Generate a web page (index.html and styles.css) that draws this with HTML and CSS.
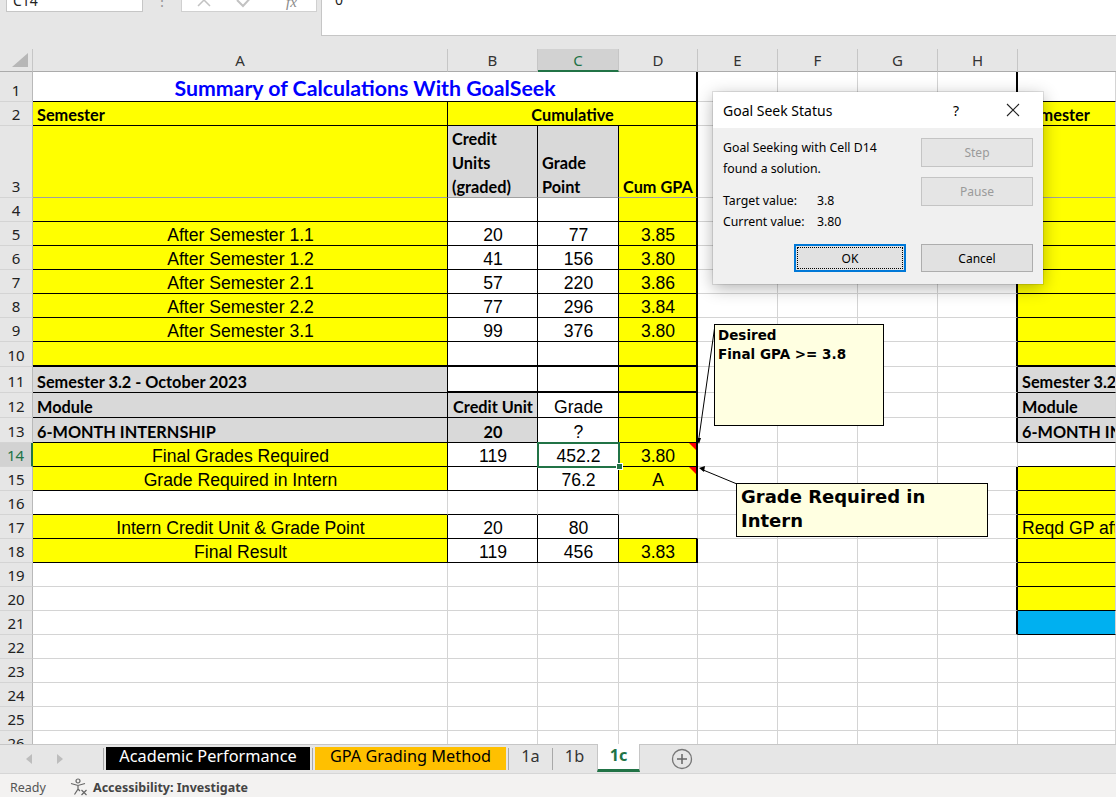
FILE: index.html
```html
<!DOCTYPE html>
<html>
<head>
<meta charset="utf-8">
<link rel="stylesheet" href="styles.css">
</head>
<body>
<div class="app">
  <div class="fbar">
    <div class="namebox"><span>C14</span></div>
    <div class="dots">⋮</div>
    <div class="fnbox">
      <svg width="135" height="24" viewBox="0 0 135 24">
        <path d="M16 6 L28 18 M28 6 L16 18" stroke="#c2c2c2" stroke-width="1.5" fill="none"/>
        <path d="M55 12 L61 18 L73 5" stroke="#c2c2c2" stroke-width="2" fill="none"/>
        <text x="104" y="19" font-family="Liberation Serif, serif" font-style="italic" font-size="15" fill="#8a8a8a">fx</text>
      </svg>
    </div>
    <div class="finput"><span>0</span></div>
  </div>

  <div class="sheet">
    <!-- header -->
    <div class="corner"><svg width="18" height="15" viewBox="0 0 18 15"><polygon points="17,0 17,14 1,14" fill="#b7b7b7"/></svg></div>
    <div class="ch">A</div><div class="ch">B</div><div class="ch sel">C</div><div class="ch">D</div><div class="ch">E</div><div class="ch">F</div><div class="ch">G</div><div class="ch">H</div><div class="ch chi"></div>

    <!-- row 1 -->
    <div class="rh">1</div>
    <div class="c title s4 bb br2">Summary of Calculations With GoalSeek</div>
    <div class="c"></div><div class="c"></div><div class="c"></div><div class="c br2"></div>
    <div class="c bb"></div>

    <!-- row 2 -->
    <div class="rh">2</div>
    <div class="c y b bb br">Semester</div>
    <div class="c y b ctr s3 bb br2">Cumulative</div>
    <div class="c"></div><div class="c"></div><div class="c"></div><div class="c br2"></div>
    <div class="c y b bb">Semester</div>

    <!-- row 3 -->
    <div class="rh">3</div>
    <div class="c y bbg br"></div>
    <div class="c g b wrap bbg br"><span>Credit<br>Units<br>(graded)</span></div>
    <div class="c g b wrap bbg br"><span>Grade<br>Point</span></div>
    <div class="c y b wrap bbg br2"><span>Cum GPA</span></div>
    <div class="c"></div><div class="c"></div><div class="c"></div><div class="c br2"></div>
    <div class="c y bbg"></div>

    <!-- row 4 -->
    <div class="rh">4</div>
    <div class="c y bb br"></div><div class="c bb br"></div><div class="c bb br"></div><div class="c y bb br2"></div>
    <div class="c"></div><div class="c"></div><div class="c"></div><div class="c br2"></div>
    <div class="c y bb"></div>

    <!-- row 5 -->
    <div class="rh">5</div>
    <div class="c y ctr bb br">After Semester 1.1</div><div class="c ctr bb br">20</div><div class="c ctr bb br">77</div><div class="c y ctr bb br2">3.85</div>
    <div class="c"></div><div class="c"></div><div class="c"></div><div class="c br2"></div>
    <div class="c y bb"></div>

    <!-- row 6 -->
    <div class="rh">6</div>
    <div class="c y ctr bb br">After Semester 1.2</div><div class="c ctr bb br">41</div><div class="c ctr bb br">156</div><div class="c y ctr bb br2">3.80</div>
    <div class="c"></div><div class="c"></div><div class="c"></div><div class="c br2"></div>
    <div class="c y bb"></div>

    <!-- row 7 -->
    <div class="rh">7</div>
    <div class="c y ctr bb br">After Semester 2.1</div><div class="c ctr bb br">57</div><div class="c ctr bb br">220</div><div class="c y ctr bb br2">3.86</div>
    <div class="c"></div><div class="c"></div><div class="c"></div><div class="c br2"></div>
    <div class="c y bb"></div>

    <!-- row 8 -->
    <div class="rh">8</div>
    <div class="c y ctr bb br">After Semester 2.2</div><div class="c ctr bb br">77</div><div class="c ctr bb br">296</div><div class="c y ctr bb br2">3.84</div>
    <div class="c"></div><div class="c"></div><div class="c"></div><div class="c br2"></div>
    <div class="c y bb"></div>

    <!-- row 9 -->
    <div class="rh">9</div>
    <div class="c y ctr bb br">After Semester 3.1</div><div class="c ctr bb br">99</div><div class="c ctr bb br">376</div><div class="c y ctr bb br2">3.80</div>
    <div class="c"></div><div class="c"></div><div class="c"></div><div class="c br2"></div>
    <div class="c y bb"></div>

    <!-- row 10 -->
    <div class="rh">10</div>
    <div class="c y bb2 br"></div><div class="c bb2 br"></div><div class="c bb2 br"></div><div class="c y bb2 br2"></div>
    <div class="c"></div><div class="c"></div><div class="c"></div><div class="c br2"></div>
    <div class="c y bb2"></div>

    <!-- row 11 -->
    <div class="rh">11</div>
    <div class="c g b bb br">Semester 3.2 - October 2023</div><div class="c bb2 br"></div><div class="c bb2 br"></div><div class="c y bb2 br2"></div>
    <div class="c"></div><div class="c"></div><div class="c"></div><div class="c br2"></div>
    <div class="c g b bb">Semester 3.2 - October 2023</div>

    <!-- row 12 -->
    <div class="rh">12</div>
    <div class="c g b bb br">Module</div><div class="c g b ctr bb br">Credit Unit</div><div class="c ctr bb br">Grade</div><div class="c y bb br2"></div>
    <div class="c"></div><div class="c"></div><div class="c"></div><div class="c br2"></div>
    <div class="c g b bb">Module</div>

    <!-- row 13 -->
    <div class="rh">13</div>
    <div class="c g b bb br">6-MONTH INTERNSHIP</div><div class="c g b ctr bb br">20</div><div class="c ctr bb br">?</div><div class="c y bb br2"></div>
    <div class="c"></div><div class="c"></div><div class="c"></div><div class="c br2"></div>
    <div class="c g b bb">6-MONTH INTERNSHIP</div>

    <!-- row 14 -->
    <div class="rh sel">14</div>
    <div class="c y ctr bb br">Final Grades Required</div><div class="c ctr bb br">119</div><div class="c ctr bb br selc">452.2</div><div class="c y ctr bb br2 note">3.80</div>
    <div class="c"></div><div class="c"></div><div class="c"></div><div class="c"></div>
    <div class="c bb"></div>

    <!-- row 15 -->
    <div class="rh">15</div>
    <div class="c y ctr bb br">Grade Required in Intern</div><div class="c bb br"></div><div class="c ctr bb br">76.2</div><div class="c y ctr bb br2 note">A</div>
    <div class="c"></div><div class="c"></div><div class="c"></div><div class="c br2"></div>
    <div class="c y bb"></div>

    <!-- row 16 -->
    <div class="rh">16</div>
    <div class="c bb"></div><div class="c bb"></div><div class="c bb"></div><div class="c"></div>
    <div class="c"></div><div class="c"></div><div class="c"></div><div class="c br2"></div>
    <div class="c y bb"></div>

    <!-- row 17 -->
    <div class="rh">17</div>
    <div class="c y ctr bb br">Intern Credit Unit &amp; Grade Point</div><div class="c ctr bb br">20</div><div class="c ctr bb br">80</div><div class="c bb"></div>
    <div class="c"></div><div class="c"></div><div class="c"></div><div class="c br2"></div>
    <div class="c y bb">Reqd GP after Semester 3.2</div>

    <!-- row 18 -->
    <div class="rh">18</div>
    <div class="c y ctr bb br">Final Result</div><div class="c ctr bb br">119</div><div class="c ctr bb br">456</div><div class="c y ctr bb br2">3.83</div>
    <div class="c"></div><div class="c"></div><div class="c"></div><div class="c br2"></div>
    <div class="c y bb"></div>

    <!-- row 19 -->
    <div class="rh">19</div>
    <div class="c"></div><div class="c"></div><div class="c"></div><div class="c"></div>
    <div class="c"></div><div class="c"></div><div class="c"></div><div class="c br2"></div>
    <div class="c y bb"></div>

    <!-- row 20 -->
    <div class="rh">20</div>
    <div class="c"></div><div class="c"></div><div class="c"></div><div class="c"></div>
    <div class="c"></div><div class="c"></div><div class="c"></div><div class="c br2"></div>
    <div class="c y bb"></div>

    <!-- row 21 -->
    <div class="rh">21</div>
    <div class="c"></div><div class="c"></div><div class="c"></div><div class="c"></div>
    <div class="c"></div><div class="c"></div><div class="c"></div><div class="c br2"></div>
    <div class="c blu bb"></div>

    <!-- rows 22-26 -->
    <div class="rh">22</div>
    <div class="c"></div><div class="c"></div><div class="c"></div><div class="c"></div><div class="c"></div><div class="c"></div><div class="c"></div><div class="c"></div><div class="c"></div>
    <div class="rh">23</div>
    <div class="c"></div><div class="c"></div><div class="c"></div><div class="c"></div><div class="c"></div><div class="c"></div><div class="c"></div><div class="c"></div><div class="c"></div>
    <div class="rh">24</div>
    <div class="c"></div><div class="c"></div><div class="c"></div><div class="c"></div><div class="c"></div><div class="c"></div><div class="c"></div><div class="c"></div><div class="c"></div>
    <div class="rh">25</div>
    <div class="c"></div><div class="c"></div><div class="c"></div><div class="c"></div><div class="c"></div><div class="c"></div><div class="c"></div><div class="c"></div><div class="c"></div>
    <div class="rh">26</div>
    <div class="c"></div><div class="c"></div><div class="c"></div><div class="c"></div><div class="c"></div><div class="c"></div><div class="c"></div><div class="c"></div><div class="c"></div>
  </div>

  <div class="tabbar">
    <div class="nav">
      <svg width="60" height="14" viewBox="0 0 60 14"><polygon points="8,2 2,7 8,12" fill="#bdbdbd"/><polygon points="33,2 39,7 33,12" fill="#bdbdbd"/></svg>
    </div>
    <div class="sep"></div>
    <div class="tab t-black">Academic Performance</div>
    <div class="sep"></div>
    <div class="tab t-orange">GPA Grading Method</div>
    <div class="sep"></div>
    <div class="tab t-plain">1a</div>
    <div class="sep"></div>
    <div class="tab t-plain">1b</div>
    <div class="tab t-active">1c</div>
    <div class="addtab">
      <svg width="22" height="22" viewBox="0 0 22 22"><circle cx="11" cy="11" r="9.5" fill="none" stroke="#777" stroke-width="1.3"/><path d="M11 6 V16 M6 11 H16" stroke="#666" stroke-width="1.5"/></svg>
    </div>
  </div>

  <div class="status">
    <span class="ready">Ready</span>
    <span class="acc">
      <svg width="20" height="18" viewBox="0 0 20 18">
        <circle cx="9" cy="3" r="2" fill="none" stroke="#666" stroke-width="1.2"/>
        <path d="M2 5.5 L9 7.5 L16 5.5 M9 7.5 V11 L5.5 16.5 M9 11 L11 13" stroke="#666" stroke-width="1.2" fill="none"/>
        <path d="M12.5 12 L17.5 17 M17.5 12 L12.5 17" stroke="#666" stroke-width="1.2"/>
      </svg>
      <b>Accessibility: Investigate</b>
    </span>
  </div>
</div>

<svg class="arrows" width="1116" height="797" viewBox="0 0 1116 797">
  <line x1="715" y1="325" x2="698.5" y2="441" stroke="#000" stroke-width="1"/>
  <polygon points="696,438 701,438 699,444" fill="#000"/>
  <line x1="737" y1="484" x2="702" y2="469.5" stroke="#000" stroke-width="1"/>
  <polygon points="699,468 705,466 704,472" fill="#000"/>
</svg>

<div class="comment cm1">Desired<br>Final GPA &gt;= 3.8</div>
<div class="comment cm2">Grade Required in<br>Intern</div>

<div class="dialog">
  <div class="dlg-title">
    <span class="dlg-name">Goal Seek Status</span>
    <span class="dlg-help">?</span>
    <svg class="dlg-x" width="14" height="14" viewBox="0 0 14 14"><path d="M1 1 L13 13 M13 1 L1 13" stroke="#222" stroke-width="1.1"/></svg>
  </div>
  <div class="dlg-body">
    <div class="dlg-text">
      <div>Goal Seeking with Cell D14</div>
      <div>found a solution.</div>
      <div class="kv first"><span class="k">Target value:</span><span>3.8</span></div>
      <div class="kv"><span class="k">Current value:</span><span>3.80</span></div>
    </div>
    <div class="dlg-side">
      <div class="btn dis">Step</div>
      <div class="btn dis">Pause</div>
    </div>
    <div class="btn ok">OK</div>
    <div class="btn">Cancel</div>
  </div>
</div>
</body>
</html>
```

FILE: styles.css
```css
html, body {
  margin: 0;
  padding: 0;
}
body {
  width: 1116px;
  height: 797px;
  overflow: hidden;
  position: relative;
  background: #e6e6e6;
  font-family: "Liberation Sans", Arial, sans-serif;
}
.app {
  display: flex;
  flex-direction: column;
  width: 1116px;
  height: 797px;
}

/* formula bar */
.fbar {
  height: 49px;
  flex: none;
  display: flex;
  align-items: flex-start;
  overflow: hidden;
}
.namebox {
  margin-left: 6px;
  margin-top: -12px;
  width: 137px;
  height: 24px;
  box-sizing: border-box;
  background: #fff;
  border: 1px solid #c6c6c6;
  display: flex;
  align-items: center;
  padding-left: 6px;
  font: 14px "Noto Sans", sans-serif;
  color: #222;
}
.dots {
  width: 38px;
  text-align: center;
  margin-top: -9px;
  font: 14px "Noto Sans", sans-serif;
  color: #999;
}
.fnbox {
  margin-top: -12px;
  width: 136px;
  height: 24px;
  box-sizing: border-box;
  background: #fff;
  border: 1px solid #d0d0d0;
}
.fnbox svg { display: block; margin-top: -1px; }
.finput {
  margin-left: 4px;
  margin-top: -12px;
  flex: 1;
  height: 48px;
  box-sizing: border-box;
  background: #fff;
  border: 1px solid #c6c6c6;
  border-right: none;
  padding: 1px 0 0 13px;
  font: 14px "Noto Sans", sans-serif;
  color: #222;
}

/* sheet grid */
.sheet {
  flex: none;
  height: 695px;
  display: grid;
  grid-template-columns: 33px 415px 90px 81px 79px 80px 80px 80px 80px 98px;
  grid-template-rows: 23px 30px 24px 72px repeat(6, 24px) 25px 26px 25px 25px repeat(13, 24px);
  overflow: hidden;
  background: #fff;
}
.corner {
  background: #e6e6e6;
  box-sizing: border-box;
  border-right: 1px solid #c6c6c6;
  border-bottom: 1px solid #ababab;
  display: flex;
  align-items: flex-end;
  justify-content: flex-end;
  padding: 0 3px 3px 0;
}
.corner svg { display: block; }
.ch {
  background: #e6e6e6;
  box-sizing: border-box;
  border-right: 1px solid #c6c6c6;
  border-bottom: 1px solid #ababab;
  display: flex;
  align-items: center;
  justify-content: center;
  font: 15px "Noto Sans", sans-serif;
  color: #333;
}
.ch.sel {
  background: #d2d2d2;
  color: #217346;
  border-bottom: 2px solid #217346;
}
.ch.chi { border-right: none; }

.rh {
  background: #e6e6e6;
  box-sizing: border-box;
  border-right: 1px solid #b9b9b9;
  border-bottom: 1px solid #d4d4d4;
  display: flex;
  align-items: flex-end;
  justify-content: center;
  padding-bottom: 1px;
  font: 15px/20px "Noto Sans", sans-serif;
  color: #222;
}
.rh.sel {
  background: #d2d2d2;
  color: #217346;
  border-right: 2px solid #217346;
}

.c {
  box-sizing: border-box;
  min-width: 0;
  border-right: 1px solid #d4d4d4;
  border-bottom: 1px solid #d4d4d4;
  background: #fff;
  display: flex;
  align-items: flex-end;
  padding: 0 3px 0 4px;
  white-space: nowrap;
  overflow: hidden;
  font-size: 17.6px;
  line-height: 20px;
  color: #000;
}
.s3 { grid-column: span 3; }
.s4 { grid-column: span 4; }
.y { background: #ffff00; }
.g { background: #d9d9d9; }
.blu { background: #00b0f0; }
.ctr { justify-content: center; }
.b {
  font-family: Lato, "Liberation Sans", sans-serif;
  font-weight: bold;
  font-size: 16.3px;
  line-height: 20px;
  padding-bottom: 0;
}
.wrap {
  white-space: normal;
  line-height: 24px;
  padding-bottom: 0;
}
.wrap > span {
  margin-bottom: -2px;
}
.title {
  justify-content: center;
  font-family: Lato, "Liberation Sans", sans-serif;
  font-weight: bold;
  font-size: 21.3px;
  line-height: 26px;
  color: #0000ff;
  padding-bottom: 0;
}
.bb { border-bottom-color: #000; }
.bb2 { border-bottom: 2px solid #000; }
.bbg { border-bottom-color: #a0a0a0; }
.br { border-right-color: #000; }
.br2 { border-right: 2px solid #000; }

.selc {
  position: relative;
  overflow: visible;
  z-index: 2;
}
.selc::after {
  content: "";
  position: absolute;
  left: -1px;
  top: -1px;
  width: 83px;
  height: 26px;
  box-sizing: border-box;
  border: 2px solid #217346;
}
.selc::before {
  content: "";
  position: absolute;
  right: -5px;
  bottom: -4px;
  width: 5px;
  height: 5px;
  background: #217346;
  border: 1px solid #fff;
  z-index: 3;
}
.note { position: relative; }
.note::after {
  content: "";
  position: absolute;
  right: 0;
  top: 0;
  border-left: 7px solid transparent;
  border-top: 7px solid #ff0000;
}

/* tab bar */
.tabbar {
  flex: none;
  height: 30px;
  box-sizing: border-box;
  border-top: 1px solid #c6c6c6;
  border-bottom: 1px solid #d6d6d6;
  background: #e6e6e6;
  display: flex;
  align-items: flex-start;
}
.nav {
  width: 103px;
  height: 28px;
  display: flex;
  align-items: center;
  padding-left: 24px;
  box-sizing: border-box;
}
.nav svg { display: block; }
.sep {
  width: 1px;
  height: 22px;
  margin-top: 3px;
  background: #a8a8a8;
}
.tab {
  height: 23px;
  margin-top: 2px;
  display: flex;
  align-items: center;
  justify-content: center;
  font: 16.3px/20px "Noto Sans", sans-serif;
  box-sizing: border-box;
  padding-bottom: 5px;
}
.t-black {
  background: #000;
  color: #fff;
  width: 204px;
  margin-left: 2px;
  margin-right: 2px;
}
.t-orange {
  background: #ffc000;
  color: #000;
  width: 191px;
  margin-left: 2px;
  margin-right: 2px;
}
.t-plain {
  width: 43px;
  color: #333;
}
.t-active {
  width: 43px;
  height: 28px;
  margin-top: -1px;
  margin-left: 1px;
  background: #fff;
  border-left: 1px solid #c6c6c6;
  border-right: 1px solid #c6c6c6;
  border-bottom: 3px solid #217346;
  color: #217346;
  font-weight: bold;
  padding-bottom: 4px;
}
.addtab {
  margin-left: 31px;
  margin-top: 3px;
}
.addtab svg { display: block; }

/* status bar */
.status {
  flex: 1;
  background: #f3f2f1;
  display: flex;
  align-items: center;
  padding-left: 10px;
  padding-top: 3px;
  font: 12.5px "Noto Sans", sans-serif;
  color: #555;
}
.ready { width: 59px; }
.acc {
  display: flex;
  align-items: center;
  gap: 4px;
  color: #444;
}
.acc svg { display: block; }

/* overlay: comments and arrows */
.arrows {
  position: absolute;
  left: 0;
  top: 0;
  pointer-events: none;
  z-index: 5;
}
.comment {
  position: absolute;
  box-sizing: border-box;
  background: #ffffe1;
  border: 1px solid #000;
  font-family: "DejaVu Sans", sans-serif;
  font-weight: bold;
  color: #000;
  z-index: 6;
}
.cm1 {
  left: 714px;
  top: 324px;
  width: 170px;
  height: 102px;
  padding: 1px 3px 0;
  font-size: 13.5px;
  line-height: 19px;
}
.cm2 {
  left: 736px;
  top: 483px;
  width: 252px;
  height: 54px;
  padding: 1px 4px;
  font-size: 18px;
  line-height: 24px;
}

/* dialog */
.dialog {
  position: absolute;
  left: 713px;
  top: 92px;
  width: 330px;
  height: 192px;
  background: #f0f0f0;
  box-shadow: 0 0 0 1px rgba(0,0,0,0.10), 0 4px 16px rgba(0,0,0,0.30);
  font-family: "Noto Sans", sans-serif;
  color: #000;
  z-index: 10;
}
.dlg-title {
  height: 36px;
  background: #fff;
  display: flex;
  align-items: center;
  padding-left: 10px;
  padding-right: 23px;
}
.dlg-name {
  flex: 1;
  font-size: 14px;
}
.dlg-help {
  font-size: 14px;
  margin-right: 47px;
}
.dlg-x { display: block; }
.dlg-body {
  display: grid;
  grid-template-columns: 183px 112px;
  column-gap: 15px;
  row-gap: 12px;
  padding: 9px 10px 12px 10px;
  font-size: 12.3px;
}
.dlg-text div {
  line-height: 21px;
  white-space: nowrap;
}
.dlg-text .kv.first { margin-top: 11px; }
.dlg-text .k {
  display: inline-block;
  width: 94px;
}
.dlg-side {
  display: flex;
  flex-direction: column;
  gap: 10px;
  padding-top: 1px;
}
.btn {
  height: 29px;
  box-sizing: border-box;
  background: #e1e1e1;
  border: 1px solid #adadad;
  display: flex;
  align-items: center;
  justify-content: center;
  font-size: 12px;
  color: #000;
}
.btn.dis {
  background: #e5e5e5;
  border-color: #c4c4c4;
  color: #9a9a9a;
}
.btn.ok {
  justify-self: end;
  width: 112px;
  height: 28px;
  border: 2px solid #0078d7;
  outline: 1px dotted #000;
  outline-offset: -4px;
}
.dlg-body > .btn:last-child { height: 28px; }
```
